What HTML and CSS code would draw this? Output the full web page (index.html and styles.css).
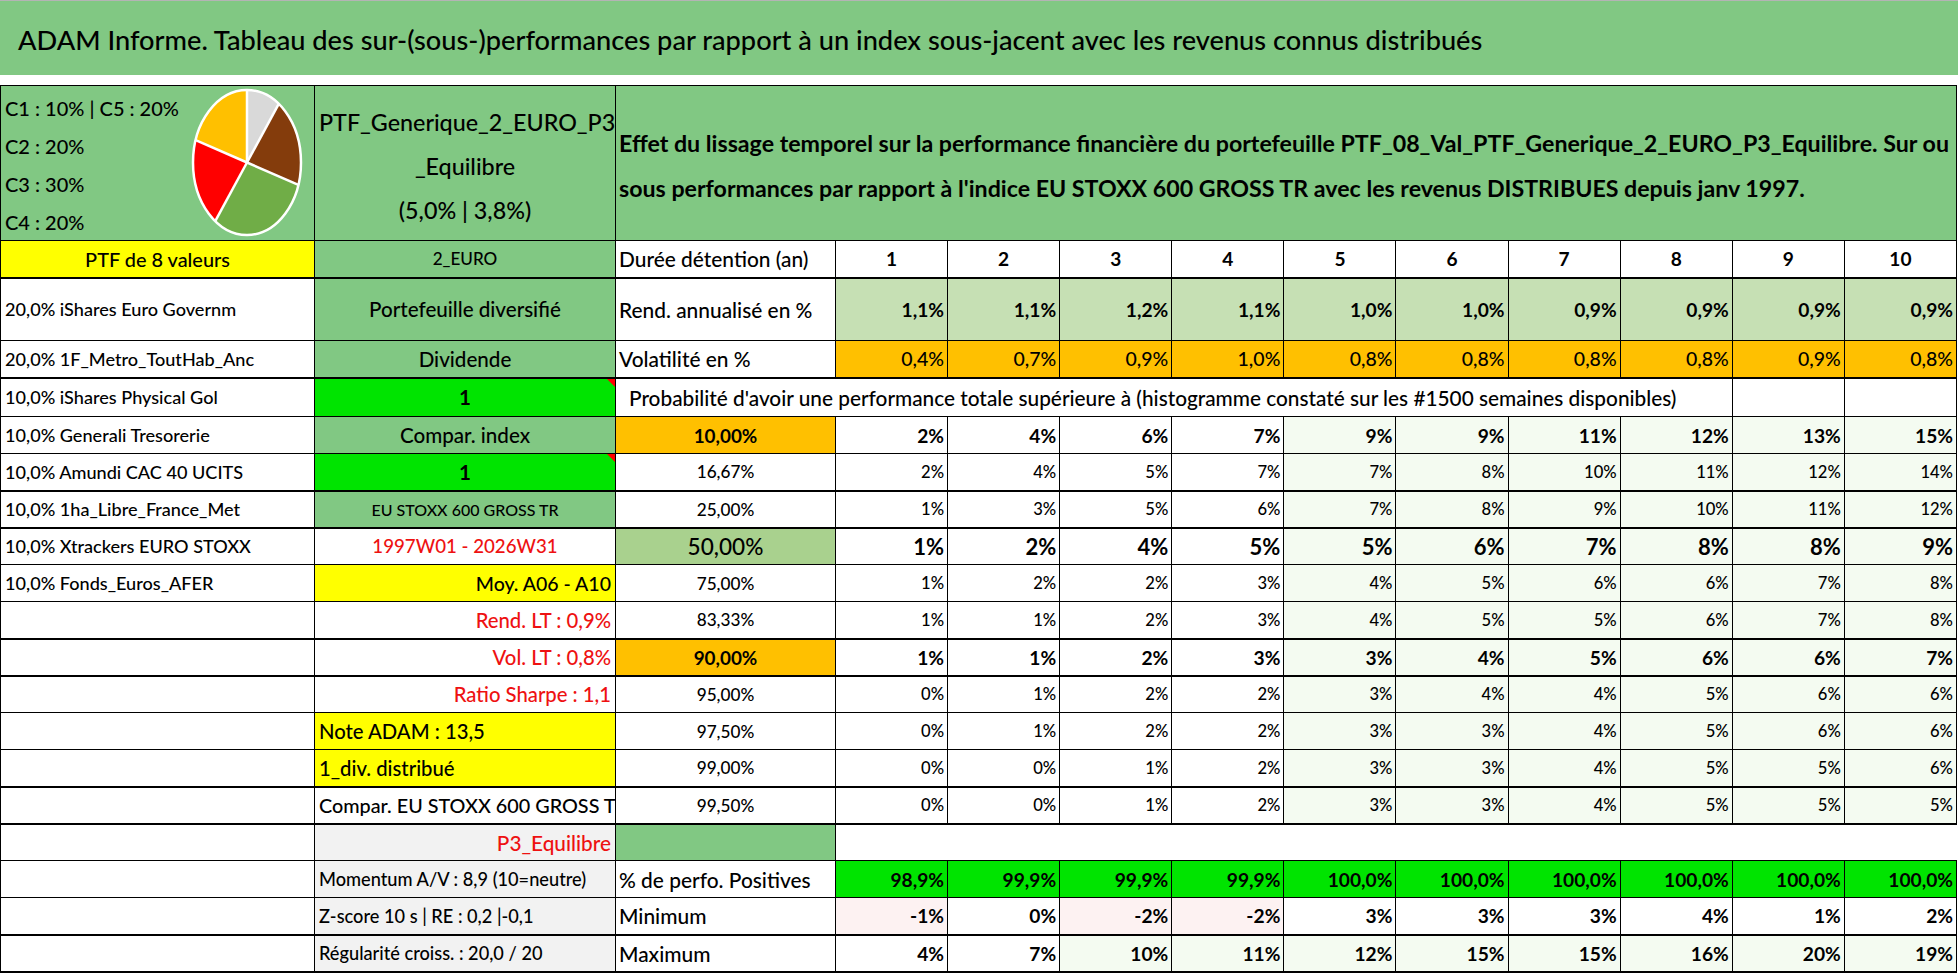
FILE: index.html
```html
<!DOCTYPE html>
<html lang="fr">
<head>
<meta charset="utf-8">
<title>ADAM Informe</title>
<link rel="stylesheet" href="styles.css">
</head>
<body>
<div class="topline"></div>
<header class="titlebar"><h1>ADAM Informe. Tableau des sur-(sous-)performances par rapport à un index sous-jacent avec les revenus connus distribués</h1></header>
<div class="gap"></div>
<table class="sheet">
<colgroup><col class="ca"><col class="cb"><col class="cc"><col class="cn" span="10"></colgroup>
<tbody>
<tr class="r1">
<td class="green alloc"><div class="alloc-wrap"><div class="alloc-text"><div>C1 : 10% | C5 : 20%</div><div>C2 : 20%</div><div>C3 : 30%</div><div>C4 : 20%</div></div>
<svg class="pie" viewBox="0 0 112 149" width="112" height="149">
<path d="M56,74.5 L56,2 A54,72.5 0 0 1 87.74,15.85 Z" fill="#d9d9d9"/>
<path d="M56,74.5 L87.74,15.85 A54,72.5 0 0 1 107.36,96.9 Z" fill="#843c0c"/>
<path d="M56,74.5 L107.36,96.9 A54,72.5 0 0 1 24.26,133.15 Z" fill="#70ad47"/>
<path d="M56,74.5 L24.26,133.15 A54,72.5 0 0 1 4.64,52.1 Z" fill="#ff0000"/>
<path d="M56,74.5 L4.64,52.1 A54,72.5 0 0 1 56,2 Z" fill="#ffc000"/>
<g stroke="#fff" stroke-width="2.5" fill="none"><line x1="56" y1="74.5" x2="56" y2="2"/><line x1="56" y1="74.5" x2="87.74" y2="15.85"/><line x1="56" y1="74.5" x2="107.36" y2="96.9"/><line x1="56" y1="74.5" x2="24.26" y2="133.15"/><line x1="56" y1="74.5" x2="4.64" y2="52.1"/><ellipse cx="56" cy="74.5" rx="54" ry="72.5"/></g>
</svg></div></td>
<td class="green center ptfname">PTF_Generique_2_EURO_P3<br>_Equilibre<br>(5,0% | 3,8%)</td>
<td class="green effet" colspan="11">Effet du lissage temporel sur la performance financière du portefeuille PTF_08_Val_PTF_Generique_2_EURO_P3_Equilibre. Sur ou<br>sous performances par rapport à l'indice EU STOXX 600 GROSS TR avec les revenus DISTRIBUES depuis janv 1997.</td>
</tr>
<tr class="tb">
<td class="yellow center ptf8">PTF de 8 valeurs</td>
<td class="green center euro">2_EURO</td>
<td class="lbl">Durée détention (an)</td>
<td class="hnum">1</td><td class="hnum">2</td><td class="hnum">3</td><td class="hnum">4</td><td class="hnum">5</td><td class="hnum">6</td><td class="hnum">7</td><td class="hnum">8</td><td class="hnum">9</td><td class="hnum">10</td>
</tr>
<tr class="r3">
<td class="asset">20,0% iShares Euro Governm</td>
<td class="green center gtxt">Portefeuille diversifié</td>
<td class="lbl">Rend. annualisé en %</td>
<td class="num b rend">1,1%</td><td class="num b rend">1,1%</td><td class="num b rend">1,2%</td><td class="num b rend">1,1%</td><td class="num b rend">1,0%</td><td class="num b rend">1,0%</td><td class="num b rend">0,9%</td><td class="num b rend">0,9%</td><td class="num b rend">0,9%</td><td class="num b rend">0,9%</td>
</tr>
<tr class="tb">
<td class="asset">20,0% 1F_Metro_ToutHab_Anc</td>
<td class="green center gtxt">Dividende</td>
<td class="lbl">Volatilité en %</td>
<td class="num orange vol">0,4%</td><td class="num orange vol">0,7%</td><td class="num orange vol">0,9%</td><td class="num orange vol">1,0%</td><td class="num orange vol">0,8%</td><td class="num orange vol">0,8%</td><td class="num orange vol">0,8%</td><td class="num orange vol">0,8%</td><td class="num orange vol">0,9%</td><td class="num orange vol">0,8%</td>
</tr>
<tr class="r5">
<td class="asset">10,0% iShares Physical Gol</td>
<td class="lime center b flag gtxt">1</td>
<td class="probtitle" colspan="9">Probabilité d'avoir une performance totale supérieure à (histogramme constaté sur les #1500 semaines disponibles)</td>
<td></td><td></td>
</tr>
<tr class="strong">
<td class="asset">10,0% Generali Tresorerie</td>
<td class="green center gtxt">Compar. index</td>
<td class="orange center q">10,00%</td>
<td class="num b">2%</td><td class="num b">4%</td><td class="num b">6%</td><td class="num b">7%</td><td class="num b tint">9%</td><td class="num b tint">9%</td><td class="num b tint">11%</td><td class="num b tint">12%</td><td class="num b tint">13%</td><td class="num b tint">15%</td>
</tr>
<tr class="tb weak">
<td class="asset">10,0% Amundi CAC 40 UCITS</td>
<td class="lime center b flag gtxt">1</td>
<td class="center q">16,67%</td>
<td class="num">2%</td><td class="num">4%</td><td class="num">5%</td><td class="num">7%</td><td class="num tint">7%</td><td class="num tint">8%</td><td class="num tint">10%</td><td class="num tint">11%</td><td class="num tint">12%</td><td class="num tint">14%</td>
</tr>
<tr class="tb weak">
<td class="asset">10,0% 1ha_Libre_France_Met</td>
<td class="green center eu">EU STOXX 600 GROSS TR</td>
<td class="center q">25,00%</td>
<td class="num">1%</td><td class="num">3%</td><td class="num">5%</td><td class="num">6%</td><td class="num tint">7%</td><td class="num tint">8%</td><td class="num tint">9%</td><td class="num tint">10%</td><td class="num tint">11%</td><td class="num tint">12%</td>
</tr>
<tr class="big">
<td class="asset">10,0% Xtrackers EURO STOXX</td>
<td class="red center wk">1997W01 - 2026W31</td>
<td class="midgreen center q">50,00%</td>
<td class="num b">1%</td><td class="num b">2%</td><td class="num b">4%</td><td class="num b">5%</td><td class="num b tint">5%</td><td class="num b tint">6%</td><td class="num b tint">7%</td><td class="num b tint">8%</td><td class="num b tint">8%</td><td class="num b tint">9%</td>
</tr>
<tr class="weak">
<td class="asset">10,0% Fonds_Euros_AFER</td>
<td class="yellow right moy">Moy. A06 - A10</td>
<td class="center q">75,00%</td>
<td class="num">1%</td><td class="num">2%</td><td class="num">2%</td><td class="num">3%</td><td class="num tint">4%</td><td class="num tint">5%</td><td class="num tint">6%</td><td class="num tint">6%</td><td class="num tint">7%</td><td class="num tint">8%</td>
</tr>
<tr class="tb weak">
<td></td>
<td class="red right rtxt">Rend. LT : 0,9%</td>
<td class="center q">83,33%</td>
<td class="num">1%</td><td class="num">1%</td><td class="num">2%</td><td class="num">3%</td><td class="num tint">4%</td><td class="num tint">5%</td><td class="num tint">5%</td><td class="num tint">6%</td><td class="num tint">7%</td><td class="num tint">8%</td>
</tr>
<tr class="tb strong">
<td></td>
<td class="red right rtxt">Vol. LT : 0,8%</td>
<td class="orange center q">90,00%</td>
<td class="num b">1%</td><td class="num b">1%</td><td class="num b">2%</td><td class="num b">3%</td><td class="num b tint">3%</td><td class="num b tint">4%</td><td class="num b tint">5%</td><td class="num b tint">6%</td><td class="num b tint">6%</td><td class="num b tint">7%</td>
</tr>
<tr class="weak">
<td></td>
<td class="red right rtxt">Ratio Sharpe : 1,1</td>
<td class="center q">95,00%</td>
<td class="num">0%</td><td class="num">1%</td><td class="num">2%</td><td class="num">2%</td><td class="num tint">3%</td><td class="num tint">4%</td><td class="num tint">4%</td><td class="num tint">5%</td><td class="num tint">6%</td><td class="num tint">6%</td>
</tr>
<tr class="weak">
<td></td>
<td class="yellow ytxt">Note ADAM : 13,5</td>
<td class="center q">97,50%</td>
<td class="num">0%</td><td class="num">1%</td><td class="num">2%</td><td class="num">2%</td><td class="num tint">3%</td><td class="num tint">3%</td><td class="num tint">4%</td><td class="num tint">5%</td><td class="num tint">6%</td><td class="num tint">6%</td>
</tr>
<tr class="tb weak">
<td></td>
<td class="yellow ytxt">1_div. distribué</td>
<td class="center q">99,00%</td>
<td class="num">0%</td><td class="num">0%</td><td class="num">1%</td><td class="num">2%</td><td class="num tint">3%</td><td class="num tint">3%</td><td class="num tint">4%</td><td class="num tint">5%</td><td class="num tint">5%</td><td class="num tint">6%</td>
</tr>
<tr class="tb weak">
<td></td>
<td class="clip ctxt">Compar. EU STOXX 600 GROSS TR</td>
<td class="center q">99,50%</td>
<td class="num">0%</td><td class="num">0%</td><td class="num">1%</td><td class="num">2%</td><td class="num tint">3%</td><td class="num tint">3%</td><td class="num tint">4%</td><td class="num tint">5%</td><td class="num tint">5%</td><td class="num tint">5%</td>
</tr>
<tr>
<td></td>
<td class="grey red right p3">P3_Equilibre</td>
<td class="green"></td>
<td class="blank" colspan="10"></td>
</tr>
<tr>
<td></td>
<td class="grey gsm">Momentum A/V : 8,9 (10=neutre)</td>
<td class="lbl">% de perfo. Positives</td>
<td class="num b lime">98,9%</td><td class="num b lime">99,9%</td><td class="num b lime">99,9%</td><td class="num b lime">99,9%</td><td class="num b lime">100,0%</td><td class="num b lime">100,0%</td><td class="num b lime">100,0%</td><td class="num b lime">100,0%</td><td class="num b lime">100,0%</td><td class="num b lime">100,0%</td>
</tr>
<tr class="tb">
<td></td>
<td class="grey gsm">Z-score 10 s | RE : 0,2 |-0,1</td>
<td class="lbl">Minimum</td>
<td class="num b pink">-1%</td><td class="num b">0%</td><td class="num b pink">-2%</td><td class="num b pink">-2%</td><td class="num b">3%</td><td class="num b">3%</td><td class="num b">3%</td><td class="num b">4%</td><td class="num b">1%</td><td class="num b">2%</td>
</tr>
<tr class="tb">
<td></td>
<td class="grey gsm">Régularité croiss. : 20,0 / 20</td>
<td class="lbl">Maximum</td>
<td class="num b">4%</td><td class="num b">7%</td><td class="num b tint">10%</td><td class="num b tint">11%</td><td class="num b tint">12%</td><td class="num b tint">15%</td><td class="num b tint">15%</td><td class="num b tint">16%</td><td class="num b tint">20%</td><td class="num b tint">19%</td>
</tr>
</tbody>
</table>
<div class="bottomline"></div>
</body>
</html>
```

FILE: styles.css
```css
* { box-sizing: border-box; }
html, body { margin: 0; padding: 0; background: #fff; }
body {
  width: 1958px;
  height: 979px;
  overflow: hidden;
  font-family: Lato, "Open Sans", "Liberation Sans", sans-serif;
  font-weight: 500;
  color: #000;
}
.topline { height: 1px; background: #b4b4b4; }
.titlebar {
  height: 74px;
  background: #81c883;
  display: flex;
  align-items: center;
  padding-left: 18px;
  padding-top: 2px;
}
.titlebar h1 {
  margin: 0;
  font-size: 27.2px;
  font-weight: 500;
  white-space: nowrap;
}
.gap { height: 10px; }
.sheet {
  border-collapse: collapse;
  table-layout: fixed;
  width: 1956px;
}
.ca { width: 314px; }
.cb { width: 301px; }
.cc { width: 220px; }
.cn { width: 112.1px; }
.sheet td {
  border: 1px solid #000;
  padding: 0 4px;
  height: 37px;
  font-size: 19.2px;
  white-space: nowrap;
  overflow: hidden;
  vertical-align: middle;
  background: #fff;
}
.sheet tr.tb > td { border-bottom-width: 2px; }
.sheet tr.r1 > td { height: 155px; }
.sheet tr.r3 > td { height: 63px; }
.sheet tr.r5 > td { height: 39px; }

.green { background: #81c883 !important; }
.yellow { background: #ffff00 !important; }
.orange { background: #ffc000 !important; }
.lime { background: #00e400 !important; }
.rend { background: #c6e0b4 !important; }
.midgreen { background: #a9d18e !important; }
.grey { background: #f2f2f2 !important; }
.tint { background: #f4fbf1 !important; }
.pink { background: #fdf2f2 !important; }

.center { text-align: center; }
.right { text-align: right; }
.b { font-weight: 700; }
.red { color: #ee1111; }

.sheet td.asset { font-size: 18.1px; padding-left: 4px; }
.sheet td.lbl { font-size: 20.9px; padding-left: 3px; }
.sheet td.ptf8 { font-size: 19.9px; }
.sheet td.euro { font-size: 17.1px; }
.sheet td.eu { font-size: 16px; }
.sheet td.gtxt { font-size: 20.6px; }
.sheet td.wk { font-size: 18.7px; }
.sheet td.moy { font-size: 19.5px; }
.sheet td.rtxt { font-size: 20.3px; }
.sheet td.ytxt { font-size: 20.3px; padding-left: 4px; }
.sheet td.ctxt { font-size: 19.8px; padding-left: 4px; }
.sheet td.gsm { font-size: 18.2px; padding-left: 4px; }
.sheet td.p3 { font-size: 20.8px; }
.sheet td.vol { font-size: 19.5px; }
.sheet td.q { font-size: 17.2px; }
.sheet tr.strong > td.q { font-size: 18.9px; font-weight: 700; }
.sheet tr.weak > td.num { font-size: 16.6px; }
.sheet tr.big > td.num { font-size: 22px; }
.sheet tr.big > td.q { font-size: 22.6px; }

.sheet td.num { text-align: right; padding-right: 3px; }
.sheet td.hnum { text-align: center; font-weight: 700; font-size: 19.1px; }
.clip { text-overflow: clip; }
.sheet td.blank { border-left: none; border-right: none; }

.flag { position: relative; }
.flag::after {
  content: "";
  position: absolute;
  top: 0;
  right: 0;
  width: 0;
  height: 0;
  border-top: 8px solid #ff0000;
  border-left: 8px solid transparent;
}

.sheet td.alloc { padding: 0; vertical-align: top; }
.alloc-wrap {
  display: flex;
  align-items: flex-start;
  height: 153px;
}
.alloc-text {
  padding: 3px 0 0 4px;
  line-height: 38px;
  font-size: 20px;
}
.pie { margin-left: auto; margin-right: 11px; margin-top: 2px; flex: none; }

.sheet td.ptfname { font-size: 23.3px; line-height: 44px; padding-top: 6px; }
.sheet td.effet {
  font-size: 23.2px;
  font-weight: 700;
  line-height: 45px;
  padding: 6px 0 0 3px;
}
.sheet td.probtitle { padding-left: 13px; font-size: 20.8px; }

.bottomline { margin-top: 9px; height: 2px; background: #a8a8a8; }
```
